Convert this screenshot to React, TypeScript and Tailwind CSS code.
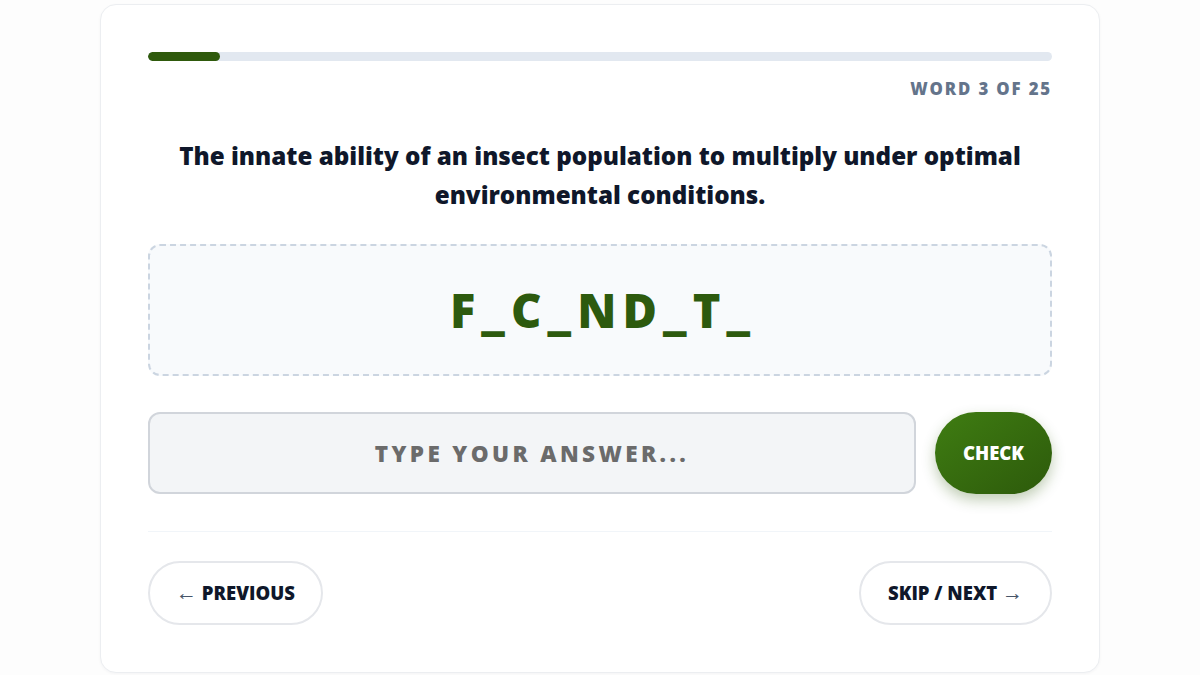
import React, { useState } from 'react';

const FONT = { fontFamily: '"Open Sans", "Noto Sans", sans-serif' };

export default function App() {
    const [answer, setAnswer] = useState('');
    const current = 3;
    const total = 25;
    const progress = ((current - 1) / total) * 100;

    return (
        <div className="min-h-screen bg-[#fdfdfd] pt-1" style={FONT}>
            <div className="mx-auto w-[1000px] rounded-2xl border border-[#eceef1] bg-white p-[47px] shadow-[0_1px_3px_rgba(15,23,42,0.04)]">
                {/* Progress */}
                <div className="h-[9px] w-full overflow-hidden rounded-full bg-[#e2e8f0]">
                    <div className="h-full rounded-full bg-[#2f5a0c]" style={{ width: `${progress}%` }} />
                </div>
                <div className="mt-[18px] text-right text-[16.8px] font-extrabold leading-5 tracking-[0.11em] text-[#64748b]">
                    WORD {current} OF {total}
                </div>

                {/* Question */}
                <h2 className="mx-auto mt-[37px] max-w-[880px] text-center text-[24.2px] font-extrabold leading-[39px] text-[#0f172a]">
                    The innate ability of an insect population to multiply under optimal environmental conditions.
                </h2>

                {/* Hint */}
                <div className="mt-[30px] flex h-[132px] items-center justify-center rounded-xl border-2 border-dashed border-[#cbd5e1] bg-[#f8fafc]">
                    <span className="pl-[0.13em] text-[47px] font-extrabold leading-none tracking-[0.13em] text-[#2d5a0e]">
                        F_C_ND_T_
                    </span>
                </div>

                {/* Answer */}
                <div className="mt-[36px] flex items-center gap-[19px]">
                    <input
                        value={answer}
                        onChange={(e) => setAnswer(e.target.value)}
                        placeholder="TYPE YOUR ANSWER..."
                        className="h-[82px] flex-1 rounded-xl border-2 border-[#d1d5db] bg-[#f3f5f7] text-center text-[22.5px] font-extrabold tracking-[0.15em] text-[#374151] outline-none placeholder:text-[#6b6b6b]"
                        style={FONT}
                    />
                    <button className="h-[82px] w-[117px] rounded-full bg-gradient-to-br from-[#3f7d12] to-[#2d5a0b] text-[18.5px] font-extrabold text-white shadow-[0_6px_14px_rgba(45,90,11,0.3)]">
                        CHECK
                    </button>
                </div>

                {/* Nav */}
                <div className="mt-[37px] flex items-center justify-between border-t border-[#f1f5f9] pt-[29px]">
                    <button className="h-[64px] rounded-full border-2 border-[#e5e7eb] bg-white px-[26px] text-[18.5px] font-extrabold text-[#0f172a]">
                        <span className="text-[21px] font-normal text-[#475569]">←</span> PREVIOUS
                    </button>
                    <button className="h-[64px] rounded-full border-2 border-[#e5e7eb] bg-white px-[27px] text-[18.5px] font-extrabold text-[#0f172a]">
                        SKIP / NEXT <span className="text-[21px] font-normal text-[#475569]">→</span>
                    </button>
                </div>
            </div>
        </div>
    );
}
